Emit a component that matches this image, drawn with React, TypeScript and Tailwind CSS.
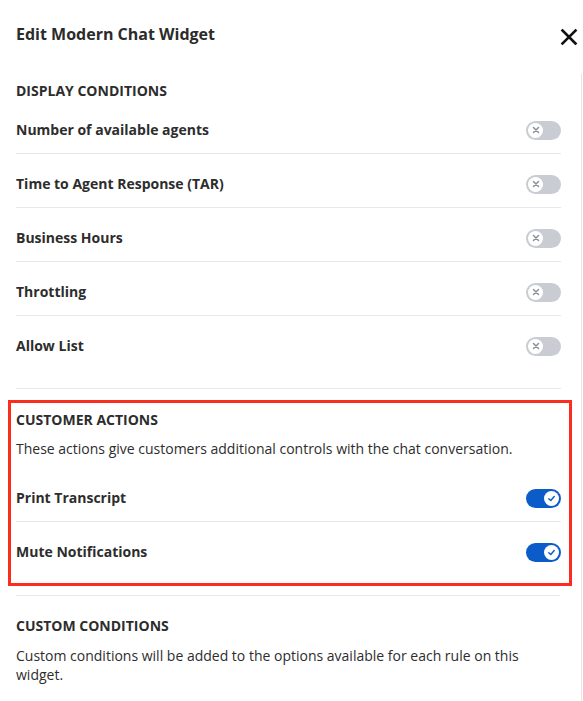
import React from "react";

function Toggle({ on }: { on: boolean }) {
  if (on) {
    return (
      <div className="flex h-[19px] w-[35px] shrink-0 items-center justify-end rounded-full bg-[#0b5cc9] pr-[2px]">
        <div className="flex h-[15px] w-[15px] items-center justify-center rounded-full bg-white">
          <svg width="9" height="9" viewBox="0 0 10 10" fill="none">
            <path d="M2 5.2 L4.2 7.3 L8 2.8" stroke="#0b5cc9" strokeWidth="1.6" strokeLinecap="round" strokeLinejoin="round" />
          </svg>
        </div>
      </div>
    );
  }
  return (
    <div className="flex h-[19px] w-[35px] shrink-0 items-center rounded-full bg-[#c9ccd2] pl-[2px]">
      <div className="flex h-[15px] w-[15px] items-center justify-center rounded-full bg-white">
        <svg width="8" height="8" viewBox="0 0 8 8" fill="none">
          <path d="M1.5 1.5 L6.5 6.5 M6.5 1.5 L1.5 6.5" stroke="#8d9096" strokeWidth="1.5" strokeLinecap="round" />
        </svg>
      </div>
    </div>
  );
}

function Row({ label, on, last }: { label: string; on: boolean; last?: boolean }) {
  return (
    <div
      className={
        "flex items-center justify-between pt-5 " +
        (last ? "pb-[13px]" : "border-b border-[#e8e8ea] pb-[13px]")
      }
    >
      <span className="text-[14px] font-bold leading-5 text-[#2d2d2d]">{label}</span>
      <Toggle on={on} />
    </div>
  );
}

export default function App() {
  return (
    <div
      className="h-[701px] w-[583px] overflow-hidden bg-white text-[#2d2d2d]"
      style={{ fontFamily: '"Open Sans", "Liberation Sans", sans-serif' }}
    >
      <div className="flex h-[74px] items-start justify-between pl-4 pr-[5px] pt-[23px]">
        <h1 className="text-[16px] font-bold leading-[22px] text-[#2b2b2b]">Edit Modern Chat Widget</h1>
        <svg width="18" height="18" viewBox="0 0 18 18" className="mt-[5px]" fill="none">
          <path d="M2.5 2.5 L15.5 15.5 M15.5 2.5 L2.5 15.5" stroke="#111" strokeWidth="2.6" strokeLinecap="square" />
        </svg>
      </div>
      <div className="h-[627px] w-[582px] border-r border-[#e6e6e6]">
        <div className="pl-4 pr-5 pt-[7px]">
          <h2 className="mb-[-1px] text-[14px] font-bold leading-5 text-[#2d2d2d]">DISPLAY CONDITIONS</h2>
          <Row label="Number of available agents" on={false} />
          <Row label="Time to Agent Response (TAR)" on={false} />
          <Row label="Business Hours" on={false} />
          <Row label="Throttling" on={false} />
          <div className="flex items-center justify-between border-b border-[#e8e8ea] pb-[32px] pt-5">
            <span className="text-[14px] font-bold leading-5 text-[#2d2d2d]">Allow List</span>
            <Toggle on={false} />
          </div>
        </div>
        <div className="ml-2 mt-[11px] w-[564px] border-[3px] border-[#fb2d1e] pb-[8px] pl-[5px] pr-[8px] pt-[7px]">
          <h2 className="text-[14px] font-bold leading-5 text-[#2d2d2d]">CUSTOMER ACTIONS</h2>
          <p className="mt-[9px] text-[14px] leading-5 text-[#2d2d2d]">
            These actions give customers additional controls with the chat conversation.
          </p>
          <div className="mt-[9px]">
            <Row label="Print Transcript" on={true} />
            <Row label="Mute Notifications" on={true} last />
          </div>
        </div>
        <div className="pl-4 pr-[21px]">
          <div className="mt-[9px] border-t border-[#e8e8ea]" />
          <h2 className="mt-5 text-[14px] font-bold leading-5 text-[#2d2d2d]">CUSTOM CONDITIONS</h2>
          <p className="mt-[10px] text-[14px] leading-[19px] text-[#2d2d2d]">
            Custom conditions will be added to the options available for each rule on this widget.
          </p>
        </div>
      </div>
    </div>
  );
}
